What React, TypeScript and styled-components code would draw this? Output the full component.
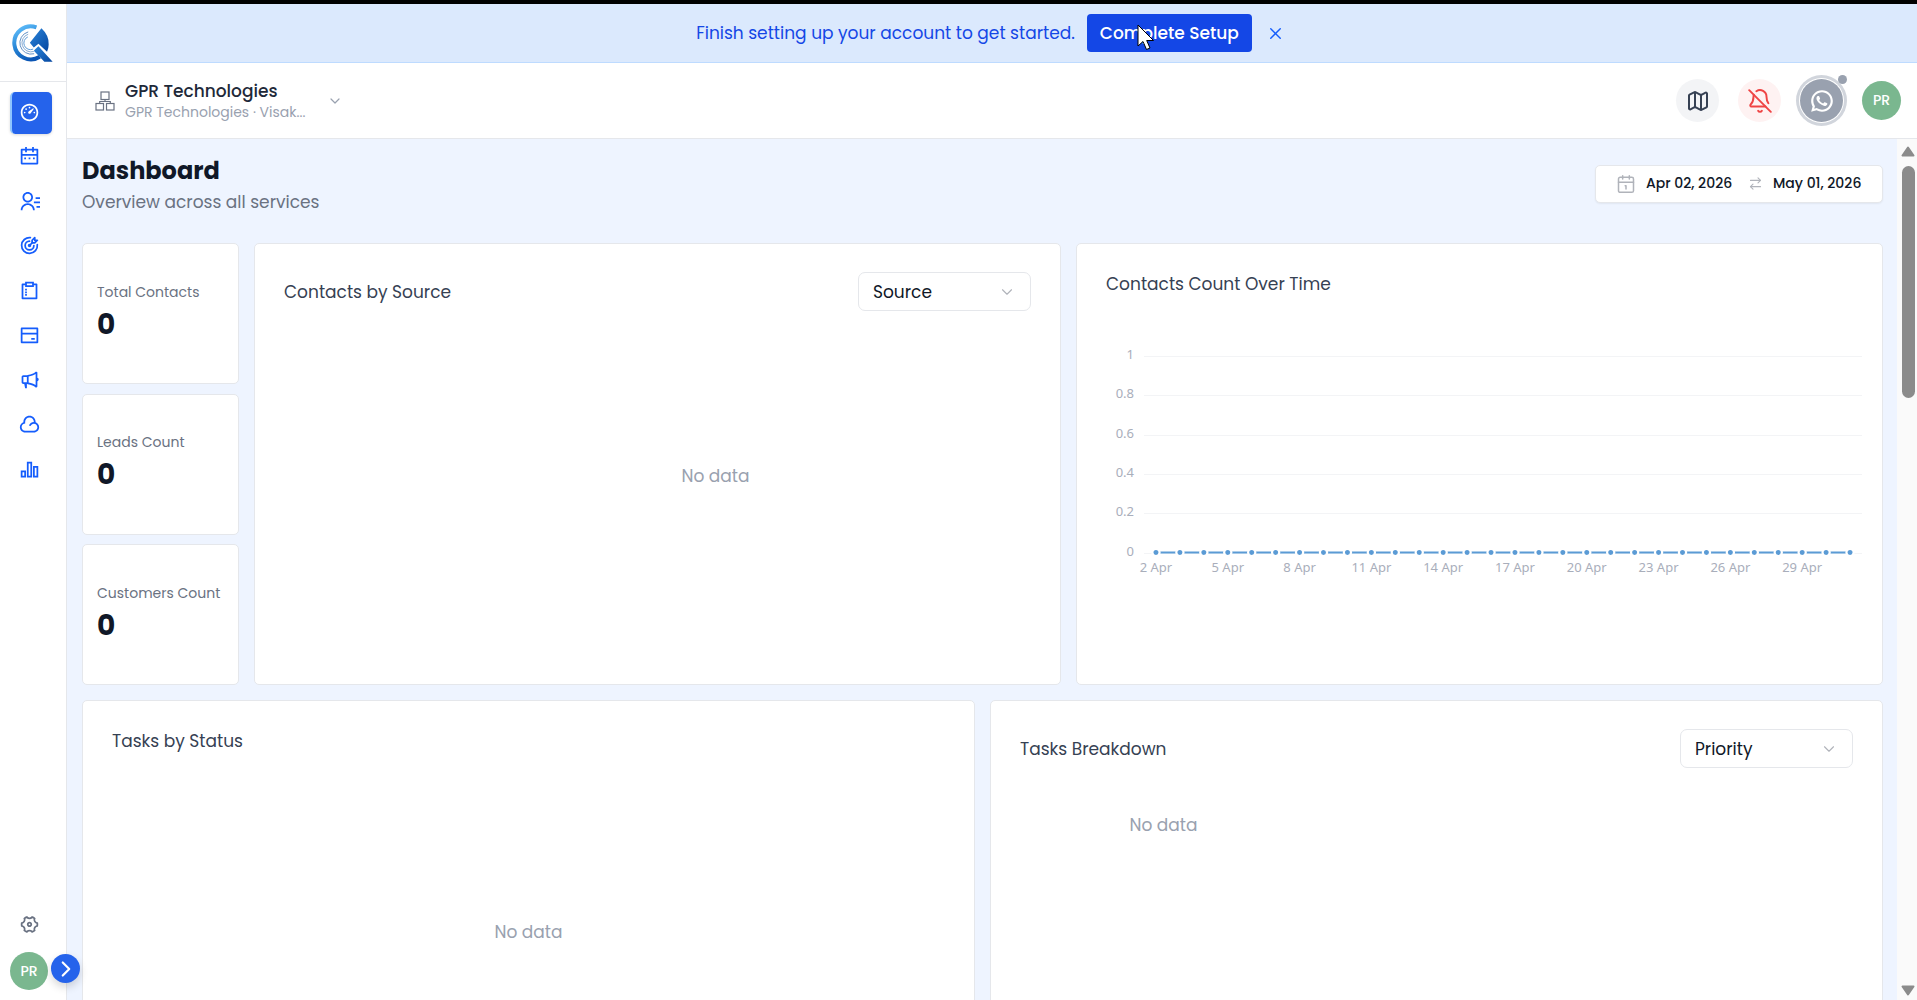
import React from "react";
import styled, { createGlobalStyle, css } from "styled-components";
import {
  RiDashboard3Line,
  RiCalendar2Line,
  RiContactsLine,
  RiSurveyLine,
  RiBankCardLine,
  RiMegaphoneLine,
  RiCloudLine,
  RiBarChart2Line,
  RiSettings4Line,
  RiWhatsappLine,
} from "react-icons/ri";
import { TbTargetArrow } from "react-icons/tb";
import { ArrowRightLeft, BellOff, Calendar1, ChevronDown, ChevronRight, Map, X } from "lucide-react";

const color = {
  text: "#101828",
  heading: "#364153",
  muted: "#6a7282",
  faint: "#99a1af",
  line: "#e5e7eb",
  blue: "#155dfc",
  page: "#eef4ff",
  green: "#7ab78f",
};

const GlobalStyle = createGlobalStyle`
  *, *::before, *::after { box-sizing: border-box; }
  body { margin: 0; background: ${color.page}; }
  body, button, input, select { font-family: Poppins, Inter, sans-serif; }
  h1, h2, p, dl, dt, dd { margin: 0; font-weight: inherit; }
  button { padding: 0; border: 0; background: none; cursor: pointer; }
`;

const Shell = styled.div`
  display: flex;
  height: 100vh;
  overflow: hidden;
  border-top: 4px solid #000;
`;

const Sidebar = styled.aside`
  display: flex;
  flex-direction: column;
  flex: none;
  width: 67px;
  background: #fff;
  border-right: 1px solid ${color.line};
`;

const LogoLink = styled.a`
  display: flex;
  flex: none;
  align-items: center;
  height: 78px;
  padding-left: 10px;
  border-bottom: 1px solid ${color.line};
`;

const Nav = styled.nav`
  display: flex;
  flex-direction: column;
  justify-content: space-between;
  height: 399px;
  margin-top: 10px;
  padding-left: 10px;
`;

const NavLink = styled.a<{ $active?: boolean }>`
  display: flex;
  align-items: center;
  justify-content: center;
  width: 42px;
  height: 42px;
  padding: 0 3px 2px 0;
  border-radius: 5px;
  color: ${color.blue};
  ${(p) =>
    p.$active &&
    css`
      padding-right: 5px;
      border-left: 2px solid #8ec5ff;
      background: #2563eb;
      color: #fff;
      box-shadow: 0 1px 3px rgba(0, 0, 0, 0.15);
    `}
`;

const SideFooter = styled.div`
  position: relative;
  display: flex;
  flex-direction: column;
  gap: 17px;
  margin-top: auto;
  padding: 0 0 10px 10px;
`;

const SettingsButton = styled.button`
  display: flex;
  justify-content: center;
  width: 38px;
  color: ${color.muted};
`;

const Avatar = styled.button<{ $size: number }>`
  flex: none;
  width: ${(p) => p.$size}px;
  height: ${(p) => p.$size}px;
  border-radius: 50%;
  background: ${color.green};
  color: #fff;
  font-size: 14px;
  font-weight: 500;
`;

const ExpandButton = styled.button`
  position: absolute;
  z-index: 2;
  right: -14px;
  bottom: 17px;
  display: flex;
  align-items: center;
  justify-content: center;
  width: 29px;
  height: 29px;
  border-radius: 50%;
  background: #2563eb;
  color: #fff;
  box-shadow: 0 4px 8px rgba(0, 0, 0, 0.16);
`;

const Column = styled.div`
  display: flex;
  flex: 1;
  flex-direction: column;
  min-width: 0;
`;

const Banner = styled.div`
  display: flex;
  flex: none;
  align-items: center;
  justify-content: center;
  gap: 12px;
  height: 59px;
  border-bottom: 1px solid #bedbff;
  background: #dbe9fd;
  color: #1447e6;
  font-size: 17px;
`;

const SetupButton = styled.button`
  position: relative;
  height: 38px;
  padding: 0 13px;
  border-radius: 4px;
  background: #1447e6;
  color: #fff;
  font-size: 17px;
  font-weight: 500;
`;

const Pointer = styled.svg`
  position: absolute;
  top: 10px;
  left: 50px;
`;

const DismissButton = styled.button`
  display: flex;
  align-items: center;
  justify-content: center;
  width: 24px;
  height: 24px;
  color: ${color.blue};
`;

const Header = styled.header`
  display: flex;
  flex: none;
  align-items: center;
  justify-content: space-between;
  height: 76px;
  padding: 0 16px 0 28px;
  border-bottom: 1px solid ${color.line};
  background: #fff;
`;

const OrgButton = styled.button`
  display: flex;
  align-items: center;
  gap: 10px;
  color: ${color.faint};
  text-align: left;
`;

const OrgText = styled.span`
  display: flex;
  flex-direction: column;
  width: 192px;
`;

const OrgName = styled.span`
  color: #1e2939;
  font-size: 17px;
  font-weight: 500;
  line-height: 22px;
`;

const OrgPlace = styled.span`
  font-size: 14px;
  line-height: 20px;
`;

const Actions = styled.div`
  display: flex;
  align-items: center;
  gap: 19px;
`;

const RoundButton = styled.button<{ $bg: string; $fg: string; $ring?: boolean }>`
  position: relative;
  display: flex;
  align-items: center;
  justify-content: center;
  width: 43px;
  height: 43px;
  border-radius: 50%;
  background: ${(p) => p.$bg};
  color: ${(p) => p.$fg};
  box-shadow: ${(p) => (p.$ring ? "0 0 0 1px #fff, 0 0 0 4px #d1d5dc" : "none")};
`;

const StatusDot = styled.span`
  position: absolute;
  top: -4px;
  right: -4px;
  width: 9px;
  height: 9px;
  border-radius: 50%;
  background: ${color.faint};
`;

const Viewport = styled.div`
  display: flex;
  flex: 1;
  min-height: 0;
  background: ${color.page};
`;

const Main = styled.main`
  flex: 1;
  min-width: 0;
  padding: 14px 14px 0 15px;
  overflow: hidden;
`;

const PageHead = styled.div`
  display: flex;
  align-items: flex-start;
  justify-content: space-between;
  margin-bottom: 28px;
`;

const PageTitle = styled.h1`
  color: ${color.text};
  font-size: 24px;
  font-weight: 700;
  line-height: 36px;
`;

const PageSubtitle = styled.p`
  color: ${color.muted};
  font-size: 17px;
  line-height: 26px;
`;

const DateRange = styled.div`
  display: flex;
  align-items: center;
  gap: 10px;
  height: 38px;
  margin-top: 12px;
  padding: 0 17px 1px 20px;
  border: 1px solid ${color.line};
  border-radius: 5px;
  background: #fff;
  color: #b0b3ba;
  box-shadow: 0 1px 2px rgba(0, 0, 0, 0.06);
`;

const DateInput = styled.input`
  width: 92px;
  padding: 0;
  border: 0;
  outline: 0;
  background: none;
  color: ${color.text};
  font-size: 14px;
  font-weight: 500;
`;

const Grid = styled.div<{ $columns: string }>`
  display: grid;
  grid-template-columns: ${(p) => p.$columns};
  gap: 15px;
  margin-bottom: 15px;
`;

const StatList = styled.dl`
  display: flex;
  flex-direction: column;
  justify-content: space-between;
`;

const surface = css`
  border: 1px solid ${color.line};
  border-radius: 5px;
  background: #fff;
`;

const Stat = styled.div`
  ${surface}
  display: flex;
  flex-direction: column;
  justify-content: center;
  height: 141px;
  padding: 0 14px;
  white-space: nowrap;
`;

const StatLabel = styled.dt`
  color: ${color.muted};
  font-size: 14px;
  line-height: 22px;
`;

const StatValue = styled.dd`
  color: ${color.text};
  font-size: 28px;
  font-weight: 700;
  line-height: 44px;
`;

const Card = styled.section`
  ${surface}
  display: flex;
  flex-direction: column;
  min-width: 0;
  min-height: 442px;
`;

const CardHead = styled.div`
  display: flex;
  align-items: center;
  justify-content: space-between;
  padding: 28px 29px 0;
`;

const CardTitle = styled.h2`
  color: ${color.heading};
  font-size: 17px;
  line-height: 24px;
`;

const SelectBox = styled.label`
  position: relative;
  display: flex;
  align-items: center;
  color: #b0b3ba;

  & svg {
    position: absolute;
    right: 15px;
    pointer-events: none;
  }
`;

const Select = styled.select`
  width: 173px;
  height: 39px;
  padding: 0 14px;
  border: 1px solid ${color.line};
  border-radius: 7px;
  outline: 0;
  appearance: none;
  background: #fff;
  color: ${color.text};
  font-size: 17px;
`;

const Empty = styled.div<{ $pad: string; $width?: string; $grow?: boolean }>`
  display: flex;
  flex: ${(p) => (p.$grow ? 1 : "none")};
  align-items: center;
  justify-content: center;
  width: ${(p) => p.$width || "auto"};
  padding: ${(p) => p.$pad};
  color: ${color.faint};
  font-size: 17px;
  line-height: 24px;
`;

const ChartFrame = styled.div`
  padding: 48px 20px 0 67px;
`;

const ChartSvg = styled.svg`
  display: block;
  width: 100%;
  height: 230px;
  overflow: visible;
  font-family: "Noto Sans", "Open Sans", sans-serif;
  font-size: 13px;
`;

const ScrollTrack = styled.div`
  display: flex;
  flex: none;
  flex-direction: column;
  align-items: center;
  width: 20px;
  padding: 7px 0 4px 2px;
  background: #fafafa;
`;

const ScrollThumb = styled.div`
  width: 13px;
  height: 232px;
  margin: 9px 0 auto;
  border-radius: 7px;
  background: #8b8b8b;
`;

function Logo() {
  return (
    <svg width="43" height="38" viewBox="0 0 130 115" aria-hidden="true">
      <defs>
        <linearGradient id="ring" x1="0.3" y1="0" x2="0.7" y2="1">
          <stop offset="0" stopColor="#5ab8f7" />
          <stop offset="0.5" stopColor="#2583d4" />
          <stop offset="1" stopColor="#0a55b4" />
        </linearGradient>
        <linearGradient id="arrow" x1="0" y1="0" x2="1" y2="1">
          <stop offset="0" stopColor="#2b86dc" />
          <stop offset="1" stopColor="#05469f" />
        </linearGradient>
      </defs>
      <path d="M80 10 A50 50 0 1 0 90 99" fill="none" stroke="url(#ring)" strokeWidth="12" />
      <path d="M55 24 A34 34 0 1 0 73 90" fill="none" stroke="#5f8fc4" strokeWidth="3" />
      <path d="M55 31 A27 27 0 1 0 72 83" fill="none" stroke="#87a9cf" strokeWidth="3" />
      <path d="M54 39 A20 20 0 1 0 70 76" fill="none" stroke="#5f9bd6" strokeWidth="3" />
      <path d="M60 57 L95 13 Q118 34 117 62 Q117 74 112 84 L86 60 L72 71 Z" fill="url(#arrow)" />
      <path d="M77 76 L86 67 L129 114 L104 114 L72 81 Z" fill="url(#arrow)" />
    </svg>
  );
}

function OrgIcon() {
  return (
    <svg width="20" height="20" viewBox="0 0 20 20" fill="none" stroke="#6a7282" strokeWidth="1.2" aria-hidden="true">
      <rect x="6" y="1" width="8" height="7.5" />
      <rect x="1" y="12.500" width="7.500" height="6.500" />
      <rect x="11.500" y="12.500" width="7.500" height="6.500" />
      <path d="M10 8.500V10.500M4.700 12.500V10.500H15.300V12.500" />
    </svg>
  );
}

function ScrollArrow({ down }: { down?: boolean }) {
  return (
    <svg width="14" height="11" viewBox="0 0 14 11" aria-hidden="true">
      <path
        d={down ? "M1.500 1.500H12.500L7 9.500Z" : "M1.500 9.500H12.500L7 1.500Z"}
        fill="#8b8b8b"
        stroke="#8b8b8b"
        strokeWidth="2"
        strokeLinejoin="round"
      />
    </svg>
  );
}

const navItems = [
  { label: "Dashboard", Icon: RiDashboard3Line },
  { label: "Calendar", Icon: RiCalendar2Line },
  { label: "Contacts", Icon: RiContactsLine },
  { label: "Leads", Icon: TbTargetArrow },
  { label: "Tasks", Icon: RiSurveyLine },
  { label: "Payments", Icon: RiBankCardLine },
  { label: "Campaigns", Icon: RiMegaphoneLine },
  { label: "Cloud", Icon: RiCloudLine },
  { label: "Reports", Icon: RiBarChart2Line },
];

const stats = [
  { label: "Total Contacts", value: 0 },
  { label: "Leads Count", value: 0 },
  { label: "Customers Count", value: 0 },
];

const ticks = ["1", "0.8", "0.6", "0.4", "0.2", "0"];
const days = Array.from({ length: 30 }, (_, i) => ({
  x: `${((i + 0.5) / 30) * 100}%`,
  label: i % 3 === 0 ? `${i + 2} Apr` : "",
}));

function CountChart() {
  const step = 39.3;
  const base = 12 + step * 5;
  return (
    <ChartSvg role="img" aria-label="Contacts count over time">
      {ticks.map((t, i) => (
        <g key={t}>
          <line x1="0" x2="100%" y1={12 + Math.round(step * i) + 0.5} y2={12 + Math.round(step * i) + 0.5} stroke="#f3f4f6" />
          <text x="-10" y={15 + step * i} textAnchor="end" fill="#a9aebb">
            {t}
          </text>
        </g>
      ))}
      <line x1={days[0].x} x2={days[29].x} y1={base} y2={base} stroke="#5b9bd5" strokeWidth="2" />
      {days.map((d) => (
        <circle key={d.x} cx={d.x} cy={base} r="3.6" fill="#5b9bd5" stroke="#fff" strokeWidth="2.200" />
      ))}
      {days.map((d) =>
        d.label ? (
          <text key={d.label} x={d.x} y={base + 19} textAnchor="middle" fill="#a9aebb">
            {d.label}
          </text>
        ) : null
      )}
    </ChartSvg>
  );
}

function Picker({ label, value }: { label: string; value: string }) {
  return (
    <SelectBox>
      <Select aria-label={label} defaultValue={value}>
        <option>{value}</option>
      </Select>
      <ChevronDown size={18} strokeWidth={1.5} />
    </SelectBox>
  );
}

export default function App() {
  return (
    <>
      <GlobalStyle />
      <Shell>
        <Sidebar>
          <LogoLink href="#" aria-label="Home">
            <Logo />
          </LogoLink>
          <Nav aria-label="Main">
            {navItems.map(({ label, Icon }, i) => (
              <NavLink key={label} href="#" aria-label={label} $active={i === 0}>
                <Icon size={21} />
              </NavLink>
            ))}
          </Nav>
          <SideFooter>
            <SettingsButton aria-label="Settings">
              <RiSettings4Line size={21} />
            </SettingsButton>
            <Avatar $size={38}>PR</Avatar>
            <ExpandButton aria-label="Expand sidebar">
              <ChevronRight size={26} strokeWidth={2} />
            </ExpandButton>
          </SideFooter>
        </Sidebar>
        <Column>
          <Banner>
            <span>Finish setting up your account to get started.</span>
            <SetupButton>
              Complete Setup
              <Pointer width="18" height="27" viewBox="0 0 18 27" aria-hidden="true">
                <path d="M1 1V22L6 17.500L9.500 25.500L13 24L9.700 16.500H16.500Z" fill="#fff" stroke="#000" />
              </Pointer>
            </SetupButton>
            <DismissButton aria-label="Dismiss">
              <X size={19} strokeWidth={1.8} />
            </DismissButton>
          </Banner>
          <Header>
            <OrgButton>
              <OrgIcon />
              <OrgText>
                <OrgName>GPR Technologies</OrgName>
                <OrgPlace>GPR Technologies · Visak...</OrgPlace>
              </OrgText>
              <ChevronDown size={16} strokeWidth={1.8} />
            </OrgButton>
            <Actions>
              <RoundButton $bg="#f3f4f6" $fg="#364153" aria-label="Guide">
                <Map size={24} />
              </RoundButton>
              <RoundButton $bg="#fef2f2" $fg="#ef4444" aria-label="Notifications off">
                <BellOff size={26} strokeWidth={1.8} />
              </RoundButton>
              <RoundButton $bg={color.faint} $fg="#fff" $ring aria-label="WhatsApp">
                <RiWhatsappLine size={26} />
                <StatusDot />
              </RoundButton>
              <Avatar $size={39}>PR</Avatar>
            </Actions>
          </Header>
          <Viewport>
            <Main>
              <PageHead>
                <div>
                  <PageTitle>Dashboard</PageTitle>
                  <PageSubtitle>Overview across all services</PageSubtitle>
                </div>
                <DateRange>
                  <Calendar1 size={20} strokeWidth={1.8} />
                  <DateInput aria-label="Start date" defaultValue="Apr 02, 2026" />
                  <ArrowRightLeft size={15} strokeWidth={1.8} />
                  <DateInput aria-label="End date" defaultValue="May 01, 2026" />
                </DateRange>
              </PageHead>
              <Grid $columns="157px 1fr 1fr">
                <StatList>
                  {stats.map((s) => (
                    <Stat key={s.label}>
                      <StatLabel>{s.label}</StatLabel>
                      <StatValue>{s.value}</StatValue>
                    </Stat>
                  ))}
                </StatList>
                <Card>
                  <CardHead>
                    <CardTitle>Contacts by Source</CardTitle>
                    <Picker label="Group contacts by" value="Source" />
                  </CardHead>
                  <Empty $grow $pad="0 28px 43px 144px">
                    No data
                  </Empty>
                </Card>
                <Card>
                  <CardHead>
                    <CardTitle>Contacts Count Over Time</CardTitle>
                  </CardHead>
                  <ChartFrame>
                    <CountChart />
                  </ChartFrame>
                </Card>
              </Grid>
              <Grid $columns="1fr 1fr">
                <Card>
                  <CardHead>
                    <CardTitle>Tasks by Status</CardTitle>
                  </CardHead>
                  <Empty $grow $pad="0 28px 31px">
                    No data
                  </Empty>
                </Card>
                <Card>
                  <CardHead>
                    <CardTitle>Tasks Breakdown</CardTitle>
                    <Picker label="Break tasks down by" value="Priority" />
                  </CardHead>
                  <Empty $width="345px" $pad="45px 28px">
                    No data
                  </Empty>
                </Card>
              </Grid>
            </Main>
            <ScrollTrack aria-hidden="true">
              <ScrollArrow />
              <ScrollThumb />
              <ScrollArrow down />
            </ScrollTrack>
          </Viewport>
        </Column>
      </Shell>
    </>
  );
}
